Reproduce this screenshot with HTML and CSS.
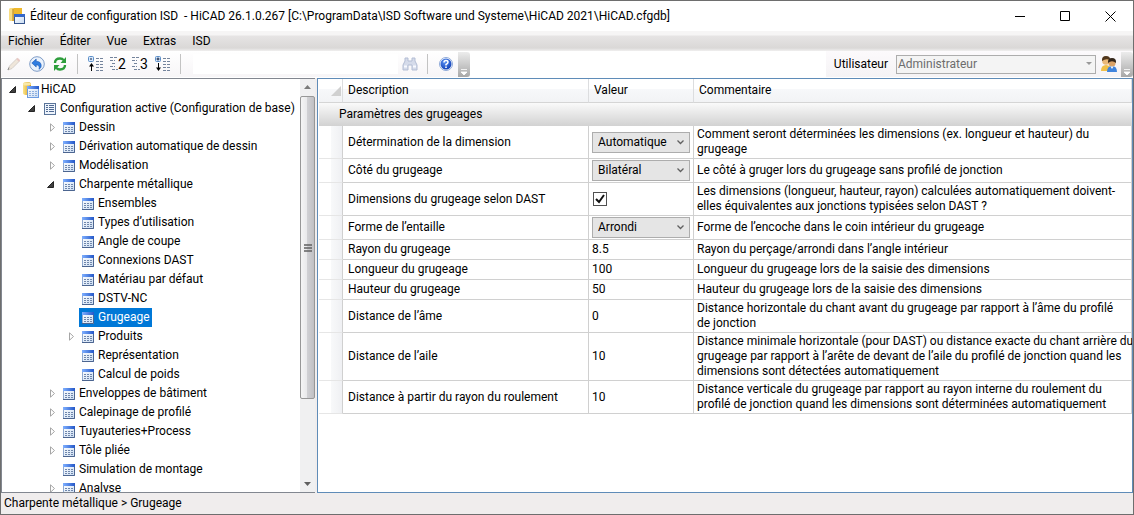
FILE: index.html
```
<!DOCTYPE html>
<html lang="fr">
<head>
    <meta charset="UTF-8">
    <meta name="viewport" content="width=device-width, initial-scale=1.0">
    <title>Éditeur de configuration ISD</title>
    <link rel="stylesheet" href="styles.css">
</head>
<body>
    <!-- shared icons -->
    <svg class="sprite" width="0" height="0">
        <defs>
            <linearGradient id="blue-head" x1="0" y1="0" x2="1" y2="0">
                <stop offset="0" stop-color="#7fb0ff"/>
                <stop offset="1" stop-color="#2457c8"/>
            </linearGradient>
            <linearGradient id="sheet" x1="0" y1="0" x2="1" y2="1">
                <stop offset="0" stop-color="#ffffff"/>
                <stop offset="1" stop-color="#c9dcf3"/>
            </linearGradient>
            <linearGradient id="gold" x1="0" y1="0" x2="1" y2="0">
                <stop offset="0" stop-color="#fbe48a"/>
                <stop offset="1" stop-color="#d79a12"/>
            </linearGradient>
            <radialGradient id="ball" cx="0.4" cy="0.3" r="0.7">
                <stop offset="0" stop-color="#5b93f5"/>
                <stop offset="1" stop-color="#1443b8"/>
            </radialGradient>
        </defs>
        <symbol id="i-table" viewBox="0 0 12 12">
            <rect x="0.5" y="0.5" width="11" height="11" fill="url(#sheet)" stroke="#8fa9d0"/>
            <rect x="0" y="0" width="12" height="3" fill="url(#blue-head)"/>
            <path d="M11.5 3v8.5H0" fill="none" stroke="#4c6590"/>
            <path d="M2 5.5h8M2 7.5h8M2 9.5h8" stroke="#6f86ab" stroke-dasharray="2 1"/>
        </symbol>
        <symbol id="i-list" viewBox="0 0 12 12">
            <rect x="0.5" y="0.5" width="11" height="11" fill="#eef4fc" stroke="#5a7499"/>
            <path d="M2 2.5h2M2 4.5h2M2 6.5h2M2 8.5h2M5 2.5h5M5 4.5h5M5 6.5h5M5 8.5h5" stroke="#506a92"/>
        </symbol>
        <symbol id="i-db" viewBox="0 0 16 16">
            <path d="M0 2q0-2 4-2t4 2v9q0 2-4 2t-4-2z" fill="url(#gold)"/>
            <ellipse cx="4" cy="2" rx="4" ry="1.6" fill="#f9e9a8"/>
            <rect x="4.5" y="4.5" width="11" height="11" fill="url(#sheet)" stroke="#6d9be0"/>
            <rect x="4" y="4" width="12" height="3" fill="url(#blue-head)"/>
            <path d="M6 9.5h8M6 11.5h8M6 13.5h8" stroke="#8fb0de" stroke-dasharray="2 1"/>
        </symbol>
        <symbol id="i-open" viewBox="0 0 7 7">
            <path d="M6.5 0.5v6h-6z" fill="#404040" stroke="#262626"/>
        </symbol>
        <symbol id="i-closed" viewBox="0 0 9 9">
            <path d="M4.5 0.8v7.4l4-3.7z" fill="#fff" stroke="#a6a6a6"/>
        </symbol>
    </svg>

    <div class="title-bar">
        <svg class="app-icon" width="16" height="16" viewBox="0 0 16 16">
            <path d="M0 2.5Q0 0 2 0h11v13H2q-2 0-2-2z" fill="url(#gold)"/>
            <path d="M0 2q0-2 2-2t2 2v10q-1 1-2 1t-2-1z" fill="#f8dd83"/>
            <path d="M4 1v12" stroke="#b98213"/>
            <path d="M5 0h8v6H5z" fill="#efb92c"/>
            <rect x="5.5" y="6.5" width="10" height="9" fill="url(#sheet)" stroke="#35548c"/>
            <rect x="5" y="6" width="11" height="3" fill="#3568c9"/>
        </svg>
        <h1>Éditeur de configuration ISD &nbsp;- HiCAD 26.1.0.267 [C:\ProgramData\ISD Software und Systeme\HiCAD 2021\HiCAD.cfgdb]</h1>
        <div class="window-buttons">
            <button aria-label="Réduire"><svg width="11" height="11"><path d="M0 5.5h10" stroke="#000"/></svg></button>
            <button aria-label="Agrandir"><svg width="11" height="11"><path d="M0.5 0.5h9v9h-9z" fill="none" stroke="#000"/></svg></button>
            <button aria-label="Fermer"><svg width="11" height="11"><path d="M0.5 0.5l10 10M10.5 0.5l-10 10" stroke="#000"/></svg></button>
        </div>
    </div>

    <nav class="menu-bar">
        <a href="#">Fichier</a>
        <a href="#">Éditer</a>
        <a href="#">Vue</a>
        <a href="#">Extras</a>
        <a href="#">ISD</a>
    </nav>

    <div class="toolbars">
        <div class="toolbar">
            <button aria-label="Modifier">
                <svg width="16" height="16" viewBox="0 0 16 16"><path d="M2 14l1.5-4L11 2.5 13.5 5 6 12.5z" fill="#efe6da" stroke="#d6d0ca"/><path d="M11 2.5L13.5 5" stroke="#e8c8c4" stroke-width="2"/><path d="M2 14l1-2.5" stroke="#8a8a8a"/></svg>
            </button>
            <button aria-label="Annuler">
                <svg width="16" height="16" viewBox="0 0 16 16"><circle cx="8" cy="8" r="7.3" fill="#eaf2fc" stroke="#7f9cc6"/><path d="M2.8 7l4.4-4v2.300q5.300.2 5 5-.3 2-2.200 3 1.200-4.500-2.800-4.400V11z" fill="#2f7de0" stroke="#1d59b5" stroke-width="0.6"/></svg>
            </button>
            <button aria-label="Actualiser">
                <svg width="14" height="16" viewBox="0 0 14 16"><path d="M2 7q0-4.500 5-4.500 2.500 0 3.500 1.700M12 9q0 4.500-5 4.500-2.500 0-3.500-1.700" fill="none" stroke="#2e9e3c" stroke-width="2.4"/><path d="M13 1v6H7.500zM1 15V9h5.500z" fill="#2e9e3c"/></svg>
            </button>
            <span class="separator"></span>
            <button aria-label="Tout réduire">
                <svg width="16" height="16" viewBox="0 0 16 16"><rect x="0.5" y="0.5" width="5" height="5" rx="1" fill="#d7e8fb" stroke="#5c8fc9"/><path d="M2 3h2" stroke="#124"/><path d="M3.5 15V9" stroke="#000"/><path d="M1 10.500h5L3.500 7z"/><path d="M8 2.500h8M8 5.500h8M8 8.500h8M8 11.500h8M8 14.500h8" stroke="#74849c" stroke-dasharray="3 1"/></svg>
            </button>
            <button class="level" aria-label="Niveau 2">
                <svg width="8" height="14" viewBox="0 0 8 14"><path d="M0 .5h8M0 3.500h5M2 6.500h4M0 9.500h5M2 12.500h6" stroke="#74849c" stroke-dasharray="3 1"/></svg>2
            </button>
            <button class="level" aria-label="Niveau 3">
                <svg width="8" height="14" viewBox="0 0 8 14"><path d="M0 .5h8M0 3.500h5M2 6.500h4M0 9.500h5M2 12.500h6" stroke="#74849c" stroke-dasharray="3 1"/></svg>3
            </button>
            <button aria-label="Tout développer">
                <svg width="16" height="16" viewBox="0 0 16 16"><rect x="0.5" y="0.5" width="5" height="5" rx="1" fill="#d7e8fb" stroke="#5c8fc9"/><path d="M1.500 3h3M3 1.500v3" stroke="#124"/><path d="M3.500 7v6" stroke="#000"/><path d="M1 11.500h5L3.500 15z"/><path d="M8 2.500h8M8 5.500h8M8 8.500h8M8 11.500h8M8 14.500h8" stroke="#74849c" stroke-dasharray="3 1"/></svg>
            </button>
            <span class="separator"></span>
            <input class="search" type="text" aria-label="Rechercher">
            <button aria-label="Lancer la recherche">
                <svg width="16" height="16" viewBox="0 0 16 16"><path d="M3 2h3v3h4V2h3v3l2 4v5h-5V9H6v5H1V9l2-4z" fill="#d5dbea" stroke="#b3bdd4"/><path d="M2 10.500h3M11 10.500h3" stroke="#f8faff" stroke-width="2"/></svg>
            </button>
            <span class="separator"></span>
            <button aria-label="Aide">
                <svg width="14" height="14" viewBox="0 0 14 14"><circle cx="7" cy="7" r="6.5" fill="#fff" stroke="#8ea9d8"/><circle cx="7" cy="7" r="5.5" fill="url(#ball)"/><path d="M5 5.500Q5 3.600 7 3.600t2 1.700Q9 6.300 7 7.500v1" fill="none" stroke="#fff" stroke-width="1.5"/><path d="M6.200 9.400h1.600v1.500H6.200z" fill="#fff"/></svg>
            </button>
            <span class="grip"><svg width="6" height="6"><path d="M0 .5h6M0 3h6L3 6z" stroke="#fff" stroke-width="0.8" fill="#fff"/></svg></span>
        </div>
        <div class="toolbar user-bar">
            <label for="user">Utilisateur</label>
            <select id="user" disabled>
                <option>Administrateur</option>
            </select>
            <button aria-label="Utilisateurs">
                <svg width="16" height="16" viewBox="0 0 16 16"><path d="M0 15q0-6 5-6t5 6z" fill="#f0c04a"/><circle cx="5" cy="5" r="3.8" fill="#e9b878"/><path d="M1 5q-.5-5 4-5t4 4Q5 2 1 5z" fill="#51371c"/><path d="M6 16q0-6 5-6t5 6z" fill="#3f84dd"/><circle cx="11" cy="7" r="3.6" fill="#dca468"/><path d="M7 7q-.5-5 4-5t4 5Q11 3.500 7 7z" fill="#34271b"/><path d="M9.500 10.500h3L11 13z" fill="#fff"/></svg>
            </button>
            <span class="grip"><svg width="6" height="6"><path d="M0 .5h6M0 3h6L3 6z" stroke="#fff" stroke-width="0.8" fill="#fff"/></svg></span>
        </div>
    </div>

    <main>
        <aside class="tree-panel">
            <div class="tree">
                <ul>
                    <li>
                        <div class="node"><button class="toggle"><svg width="7" height="7"><use href="#i-open"/></svg></button><a href="#" class="root"><svg width="16" height="16"><use href="#i-db"/></svg>HiCAD</a></div>
                        <ul>
                            <li>
                                <div class="node"><button class="toggle"><svg width="7" height="7"><use href="#i-open"/></svg></button><a href="#"><svg width="12" height="12"><use href="#i-list"/></svg>Configuration active (Configuration de base)</a></div>
                                <ul>
                                    <li><div class="node"><button class="toggle"><svg width="9" height="9"><use href="#i-closed"/></svg></button><a href="#"><svg width="12" height="12"><use href="#i-table"/></svg>Dessin</a></div></li>
                                    <li><div class="node"><button class="toggle"><svg width="9" height="9"><use href="#i-closed"/></svg></button><a href="#"><svg width="12" height="12"><use href="#i-table"/></svg>Dérivation automatique de dessin</a></div></li>
                                    <li><div class="node"><button class="toggle"><svg width="9" height="9"><use href="#i-closed"/></svg></button><a href="#"><svg width="12" height="12"><use href="#i-table"/></svg>Modélisation</a></div></li>
                                    <li>
                                        <div class="node"><button class="toggle"><svg width="7" height="7"><use href="#i-open"/></svg></button><a href="#"><svg width="12" height="12"><use href="#i-table"/></svg>Charpente métallique</a></div>
                                        <ul>
                                            <li><div class="node leaf"><a href="#"><svg width="12" height="12"><use href="#i-table"/></svg>Ensembles</a></div></li>
                                            <li><div class="node leaf"><a href="#"><svg width="12" height="12"><use href="#i-table"/></svg>Types d’utilisation</a></div></li>
                                            <li><div class="node leaf"><a href="#"><svg width="12" height="12"><use href="#i-table"/></svg>Angle de coupe</a></div></li>
                                            <li><div class="node leaf"><a href="#"><svg width="12" height="12"><use href="#i-table"/></svg>Connexions DAST</a></div></li>
                                            <li><div class="node leaf"><a href="#"><svg width="12" height="12"><use href="#i-table"/></svg>Matériau par défaut</a></div></li>
                                            <li><div class="node leaf"><a href="#"><svg width="12" height="12"><use href="#i-table"/></svg>DSTV-NC</a></div></li>
                                            <li><div class="node leaf"><a href="#" class="selected"><svg width="12" height="12"><use href="#i-table"/></svg>Grugeage</a></div></li>
                                            <li><div class="node"><button class="toggle"><svg width="9" height="9"><use href="#i-closed"/></svg></button><a href="#"><svg width="12" height="12"><use href="#i-table"/></svg>Produits</a></div></li>
                                            <li><div class="node leaf"><a href="#"><svg width="12" height="12"><use href="#i-table"/></svg>Représentation</a></div></li>
                                            <li><div class="node leaf"><a href="#"><svg width="12" height="12"><use href="#i-table"/></svg>Calcul de poids</a></div></li>
                                        </ul>
                                    </li>
                                    <li><div class="node"><button class="toggle"><svg width="9" height="9"><use href="#i-closed"/></svg></button><a href="#"><svg width="12" height="12"><use href="#i-table"/></svg>Enveloppes de bâtiment</a></div></li>
                                    <li><div class="node"><button class="toggle"><svg width="9" height="9"><use href="#i-closed"/></svg></button><a href="#"><svg width="12" height="12"><use href="#i-table"/></svg>Calepinage de profilé</a></div></li>
                                    <li><div class="node"><button class="toggle"><svg width="9" height="9"><use href="#i-closed"/></svg></button><a href="#"><svg width="12" height="12"><use href="#i-table"/></svg>Tuyauteries+Process</a></div></li>
                                    <li><div class="node"><button class="toggle"><svg width="9" height="9"><use href="#i-closed"/></svg></button><a href="#"><svg width="12" height="12"><use href="#i-table"/></svg>Tôle pliée</a></div></li>
                                    <li><div class="node leaf"><a href="#"><svg width="12" height="12"><use href="#i-table"/></svg>Simulation de montage</a></div></li>
                                    <li><div class="node"><button class="toggle"><svg width="9" height="9"><use href="#i-closed"/></svg></button><a href="#"><svg width="12" height="12"><use href="#i-table"/></svg>Analyse</a></div></li>
                                </ul>
                            </li>
                        </ul>
                    </li>
                </ul>
            </div>
            <div class="scrollbar">
                <svg width="7" height="4"><path d="M3.500 0L7 4H0z" fill="#7a7a7a"/></svg>
                <div class="track"><div class="thumb"><svg width="8" height="8"><path d="M0 1h8M0 4h8M0 7h8" stroke="#606060" stroke-width="1.5"/></svg></div></div>
                <svg width="7" height="4"><path d="M0 0h7L3.500 4z" fill="#606060"/></svg>
            </div>
        </aside>

        <section class="grid-panel">
            <table>
                <colgroup>
                    <col class="col-head">
                    <col class="col-desc">
                    <col class="col-value">
                    <col>
                </colgroup>
                <thead>
                    <tr>
                        <th class="corner"><svg width="10" height="10"><path d="M10 0v10H0z" fill="#d0d0d0"/></svg></th>
                        <th>Description</th>
                        <th>Valeur</th>
                        <th>Commentaire</th>
                    </tr>
                </thead>
                <tbody>
                    <tr class="group">
                        <td colspan="4">Paramètres des grugeages</td>
                    </tr>
                    <tr>
                        <td class="row-head"></td>
                        <td><label for="dimension">Détermination de la dimension</label></td>
                        <td><select id="dimension"><option>Automatique</option></select></td>
                        <td>Comment seront déterminées les dimensions (ex. longueur et hauteur) du<br>grugeage</td>
                    </tr>
                    <tr>
                        <td class="row-head"></td>
                        <td><label for="cote">Côté du grugeage</label></td>
                        <td><select id="cote"><option>Bilatéral</option></select></td>
                        <td>Le côté à gruger lors du grugeage sans profilé de jonction</td>
                    </tr>
                    <tr>
                        <td class="row-head"></td>
                        <td><label for="dast">Dimensions du grugeage selon DAST</label></td>
                        <td><input type="checkbox" id="dast" checked></td>
                        <td>Les dimensions (longueur, hauteur, rayon) calculées automatiquement doivent-<br>elles équivalentes aux jonctions typisées selon DAST ?</td>
                    </tr>
                    <tr>
                        <td class="row-head"></td>
                        <td><label for="forme">Forme de l’entaille</label></td>
                        <td><select id="forme"><option>Arrondi</option></select></td>
                        <td>Forme de l’encoche dans le coin intérieur du grugeage</td>
                    </tr>
                    <tr>
                        <td class="row-head"></td>
                        <td>Rayon du grugeage</td>
                        <td>8.5</td>
                        <td>Rayon du perçage/arrondi dans l’angle intérieur</td>
                    </tr>
                    <tr>
                        <td class="row-head"></td>
                        <td>Longueur du grugeage</td>
                        <td>100</td>
                        <td>Longueur du grugeage lors de la saisie des dimensions</td>
                    </tr>
                    <tr>
                        <td class="row-head"></td>
                        <td>Hauteur du grugeage</td>
                        <td>50</td>
                        <td>Hauteur du grugeage lors de la saisie des dimensions</td>
                    </tr>
                    <tr>
                        <td class="row-head"></td>
                        <td>Distance de l’âme</td>
                        <td>0</td>
                        <td>Distance horizontale du chant avant du grugeage par rapport à l’âme du profilé<br>de jonction</td>
                    </tr>
                    <tr>
                        <td class="row-head"></td>
                        <td>Distance de l’aile</td>
                        <td>10</td>
                        <td>Distance minimale horizontale (pour DAST) ou distance exacte du chant arrière du<br>grugeage par rapport à l’arête de devant de l’aile du profilé de jonction quand les<br>dimensions sont détectées automatiquement</td>
                    </tr>
                    <tr>
                        <td class="row-head"></td>
                        <td>Distance à partir du rayon du roulement</td>
                        <td>10</td>
                        <td>Distance verticale du grugeage par rapport au rayon interne du roulement du<br>profilé de jonction quand les dimensions sont déterminées automatiquement</td>
                    </tr>
                </tbody>
            </table>
        </section>
    </main>

    <footer>Charpente métallique &gt; Grugeage</footer>
</body>
</html>
```

FILE: styles.css
```
* {
    box-sizing: border-box;
}
body {
    display: flex;
    flex-direction: column;
    height: 100vh;
    margin: 0;
    border: 1px solid #6e6e6e;
    overflow: hidden;
    font-family: Roboto, "Liberation Sans", sans-serif;
    font-size: 12px;
    line-height: 15px;
    color: #000;
    background-color: #f0eded;
}
button {
    display: flex;
    align-items: center;
    justify-content: center;
    padding: 0;
    border: 0;
    background: none;
    font: inherit;
    color: inherit;
}
svg {
    display: block;
    flex: none;
}
a {
    color: inherit;
    text-decoration: none;
}
.sprite {
    position: absolute;
}

/* title */
.title-bar {
    display: flex;
    align-items: center;
    height: 30px;
    padding-left: 8px;
    background-color: white;
}
.title-bar h1 {
    flex: 1;
    margin: 0 0 0 5px;
    font-size: 12px;
    font-weight: normal;
    white-space: nowrap;
}
.window-buttons {
    display: flex;
}
.window-buttons button {
    width: 45px;
    height: 30px;
}

/* menu */
.menu-bar {
    display: flex;
    align-items: center;
    gap: 16px;
    height: 20px;
    padding-left: 7px;
    background: linear-gradient(#f6f5f5 0, #f6f5f5 4px, #e6e4e4 5px, #dad8d7 17px, #f0efef);
}

/* toolbars */
.toolbars {
    display: flex;
    justify-content: space-between;
    height: 27px;
    background-color: white;
}
.toolbar {
    display: flex;
    align-items: center;
    height: 26px;
    background: linear-gradient(#fff, #f7f5f7);
}
.toolbar button {
    width: 23px;
    height: 22px;
}
.toolbar:first-child {
    padding-left: 1px;
}
.toolbar .level {
    width: 22px;
    font-size: 14px;
}
.separator {
    width: 1px;
    height: 20px;
    margin: 0 6px;
    background-color: #c3c3c3;
}
.search {
    width: 205px;
    height: 20px;
    margin: 0 0 0 6px;
    border: 0;
    background-color: white;
}
.grip {
    display: flex;
    align-items: flex-end;
    justify-content: center;
    width: 12px;
    height: 25px;
    margin-left: 1px;
    padding-bottom: 2px;
    border-radius: 0 3px 3px 0;
    background: linear-gradient(#ececec, #a8a8a8);
}
.user-bar {
    padding-left: 8px;
    background: linear-gradient(#fcfafc, #f5f3f5);
}
.user-bar select {
    width: 200px;
    height: 19px;
    margin: 0 1px 0 8px;
    padding: 0 1px;
    border: 1px solid #adadad;
    color: #6d6d6d;
    opacity: 1;
    background: #f4f4f4 url("data:image/svg+xml,%3Csvg xmlns='http://www.w3.org/2000/svg' width='7' height='4'%3E%3Cpath d='M0 0h6L3 3z' fill='%23999'/%3E%3C/svg%3E") no-repeat right 2px center;
}
select {
    appearance: none;
    display: block;
    border-radius: 0;
    font: inherit;
    color: #000;
}

/* main area */
main {
    display: flex;
    flex: 1;
    gap: 2px;
    min-height: 0;
}
.tree-panel {
    display: flex;
    width: 314px;
    border: 1px solid #828790;
    border-right: 0;
    background-color: white;
}
.tree {
    flex: 1;
    overflow: hidden;
    padding: 1px 0 0 1px;
}
.tree ul {
    margin: 0;
    padding: 0;
    list-style: none;
}
.tree ul ul {
    padding-left: 19px;
}
.node {
    display: flex;
    height: 19px;
}
.node.leaf {
    padding-left: 19px;
}
.toggle {
    flex: none;
    width: 19px;
}
.node a {
    display: flex;
    align-items: center;
    gap: 4px;
    padding: 0 2px 0 3px;
    white-space: nowrap;
}
.node a.root {
    gap: 2px;
    padding-left: 1px;
}
.node a.selected {
    color: white;
    background-color: #0078d7;
}
.scrollbar {
    display: flex;
    flex-direction: column;
    align-items: center;
    gap: 7px;
    width: 15px;
    padding: 6px 0;
    background-color: #f0f0f1;
}
.track {
    flex: 1;
    width: 15px;
}
.thumb {
    display: flex;
    align-items: center;
    justify-content: center;
    height: 80%;
    border: 1px solid #979797;
    border-radius: 2px;
    background: linear-gradient(to right, #f5f5f5, #e9e9eb 45%, #d0d0d3 50%, #c0c0c4);
}

.grid-panel {
    flex: 1;
    min-width: 0;
    padding: 0 0 0 1px;
    border: 1px solid #5f8cb8;
    background-color: white;
    overflow: hidden;
}
table {
    width: 100%;
    table-layout: fixed;
    border-collapse: separate;
    border-spacing: 0;
}
.col-head {
    width: 24px;
}
.col-desc {
    width: 246px;
}
.col-value {
    width: 105px;
}
th {
    height: 24px;
    padding: 0 5px;
    border-right: 1px solid #dcdddf;
    border-bottom: 1px solid #d5d5d5;
    font-weight: normal;
    text-align: left;
    background: linear-gradient(white 0, white 10px, #f7f8fa 10px, #f2f3f5);
}
th.corner {
    padding: 0 0 0 12px;
}
td {
    height: 20px;
    padding: 1px 3px;
    border-right: 1px solid #d0d0d0;
    border-bottom: 1px solid #d0d0d0;
    white-space: nowrap;
}
td:nth-child(2) {
    padding-left: 5px;
}
td.row-head {
    border-bottom-color: #e6e6e6;
    background: linear-gradient(to right, white 12px, #f8f9fa 12px, #eff0f3);
}
.group td {
    height: 23px;
    padding: 0 20px;
    border: 0;
    background: linear-gradient(#fafafa, #d2d2d2);
}
td select {
    width: 98px;
    height: 21px;
    padding: 0 5px;
    border: 1px solid #adadad;
    background: #e5e5e5 url("data:image/svg+xml,%3Csvg xmlns='http://www.w3.org/2000/svg' width='7' height='5'%3E%3Cpath d='M.5 .5l3 3 3-3' fill='none' stroke='%23606060' stroke-width='1.300'/%3E%3C/svg%3E") no-repeat right 5px top 7px;
}
td input {
    appearance: none;
    display: block;
    width: 14px;
    height: 14px;
    margin: 0 1px;
    border: 1px solid #505050;
    background: white url("data:image/svg+xml,%3Csvg xmlns='http://www.w3.org/2000/svg' width='12' height='12'%3E%3Cpath d='M2 6l3 3 5-7' fill='none' stroke='%23111' stroke-width='2'/%3E%3C/svg%3E") no-repeat center;
}

footer {
    height: 21px;
    padding: 3px;
    white-space: nowrap;
}
```
